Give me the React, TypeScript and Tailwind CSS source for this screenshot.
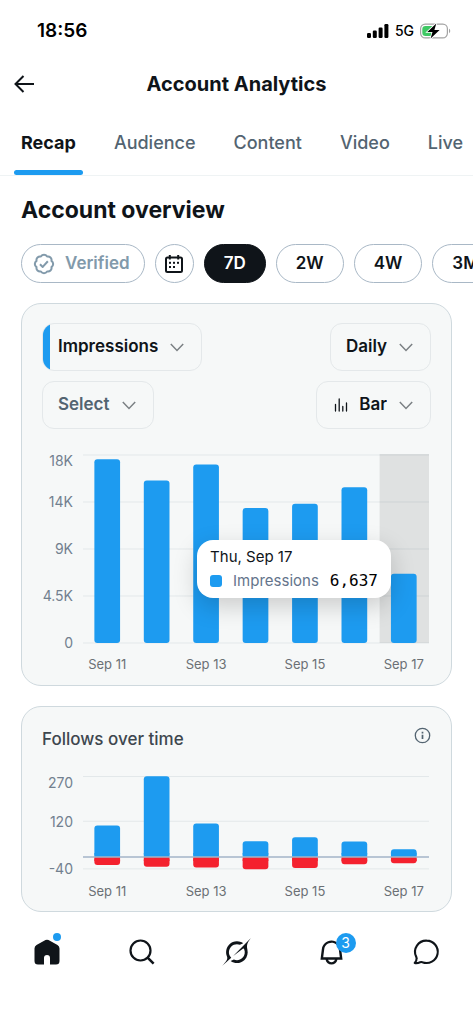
import { useState } from 'react';
import clsx from 'clsx';

const tabs = ['Recap', 'Audience', 'Content', 'Video', 'Live'];
const ranges = ['7D', '2W', '4W', '3M'];

const impressions = [
    { day: 'Sep 11', value: 17600 },
    { day: 'Sep 12', value: 15560 },
    { day: 'Sep 13', value: 17090 },
    { day: 'Sep 14', value: 12930 },
    { day: 'Sep 15', value: 13340 },
    { day: 'Sep 16', value: 14920 },
    { day: 'Sep 17', value: 6637 },
];

const follows = [
    { day: 'Sep 11', gained: 106, lost: 27 },
    { day: 'Sep 12', gained: 271, lost: 33 },
    { day: 'Sep 13', gained: 112, lost: 35 },
    { day: 'Sep 14', gained: 53, lost: 41 },
    { day: 'Sep 15', gained: 66, lost: 37 },
    { day: 'Sep 16', gained: 52, lost: 24 },
    { day: 'Sep 17', gained: 26, lost: 21 },
];

const band = 100 / 7;
const barX = (i: number) => `${(i + 0.23) * band}%`;
const barWidth = `${band * 0.52}%`;
const centerX = (i: number) => `${(i + 0.49) * band}%`;

const StatusBar = () => (
    <div className="flex items-center justify-between pt-[17px] pr-[22px] pl-[37px]">
        <span className="text-[19px] leading-7 font-semibold text-black">18:56</span>
        <div className="flex items-center gap-[6px]">
            <svg width="22" height="14" viewBox="0 0 22 14" fill="#000" aria-hidden="true">
                <rect x="0" y="9" width="4" height="5" rx="1.2" />
                <rect x="5.8" y="6.5" width="4" height="7.5" rx="1.2" />
                <rect x="11.6" y="3.5" width="4" height="10.5" rx="1.2" />
                <rect x="17.4" y="0" width="4" height="14" rx="1.2" />
            </svg>
            <span className="text-sm font-medium text-black">5G</span>
            <svg width="31" height="16" viewBox="0 0 31 16" aria-hidden="true">
                <rect x="0.6" y="1.1" width="26.8" height="13.8" rx="4.6" fill="#fff" stroke="#a3a3a3" strokeWidth="1.2" />
                <path d="M5.5 3H14v10H5.5A3.2 3.2 0 0 1 2.3 9.8V6.2A3.2 3.2 0 0 1 5.5 3Z" fill="#3fc864" />
                <path d="M29 5.8c1.6.6 1.6 3.800 0 4.4Z" fill="#a3a3a3" />
                <path d="M16.3.4 7.3 9h5.2l-1.900 6.600L19.600 7h-5.200Z" fill="#000" stroke="#fff" strokeWidth="1.6" paintOrder="stroke" />
            </svg>
        </div>
    </div>
);

const Chevron = () => (
    <svg width="14" height="9" viewBox="0 0 14 9" fill="none" stroke="#7b8084" strokeWidth="1.5" aria-hidden="true">
        <path d="M.8 1 7 7.4 13.2 1" />
    </svg>
);

const VerifiedIcon = () => (
    <svg width="22" height="22" viewBox="0 0 24 24" fill="none" stroke="#829aab" strokeWidth="2.2" strokeLinejoin="round" aria-hidden="true">
        <path d="M3.850 8.620a4 4 0 0 1 4.780-4.770 4 4 0 0 1 6.740 0 4 4 0 0 1 4.780 4.780 4 4 0 0 1 0 6.740 4 4 0 0 1-4.770 4.780 4 4 0 0 1-6.750 0 4 4 0 0 1-4.780-4.770 4 4 0 0 1 0-6.760Z" />
        <path d="m7.600 12.300 3 2.900 5.600-6.200" />
    </svg>
);

const CalendarIcon = () => (
    <svg width="20" height="20" viewBox="0 0 20 20" fill="#0f1419" aria-hidden="true">
        <rect x="2" y="3.5" width="16" height="14.5" rx="1.5" fill="none" stroke="#0f1419" strokeWidth="2" />
        <rect x="4.8" y="1" width="2" height="4.5" />
        <rect x="13.2" y="1" width="2" height="4.5" />
        <rect x="5" y="7.8" width="2" height="2" />
        <rect x="9" y="7.8" width="2" height="2" />
        <rect x="13" y="7.8" width="2" height="2" />
        <rect x="5" y="12" width="2" height="2" />
        <rect x="9" y="12" width="2" height="2" />
    </svg>
);

const BarsIcon = () => (
    <svg width="14" height="14" viewBox="0 0 14 14" fill="none" stroke="#0f1419" strokeWidth="1.3" strokeLinecap="round" aria-hidden="true">
        <path d="M1.5 6.5V13M5.2 1v12M8.8 8.5V13M12.5 5v8" />
    </svg>
);

type DropdownProps = {
    label: string;
    options: string[];
    accent?: boolean;
    muted?: boolean;
    icon?: React.ReactNode;
};

const Dropdown = ({ label, options, accent, muted, icon }: DropdownProps) => (
    <div className="relative flex h-12 items-center overflow-hidden rounded-xl border border-[#e4e8ea]">
        {accent && <span className="absolute inset-y-0 left-0 w-[7px] bg-[#1d9bf0]" />}
        {icon && <span className="pointer-events-none absolute left-[17px]">{icon}</span>}
        <select
            aria-label={label}
            className={clsx(
                'field-sizing-content h-full cursor-pointer appearance-none bg-transparent pr-[43px] text-[17px] font-semibold outline-none',
                icon ? 'pl-[42px]' : 'pl-[15px]',
                muted ? 'text-[#536471]' : 'text-[#0f1419]'
            )}
        >
            {options.map((option) => (
                <option key={option}>{option}</option>
            ))}
        </select>
        <span className="pointer-events-none absolute right-[17px]">
            <Chevron />
        </span>
    </div>
);

const DayLabels = ({ days, y }: { days: string[]; y: number }) => (
    <>
        {days.map((day, i) =>
            i % 2 === 0 ? (
                <text key={day} x={centerX(i)} y={y} textAnchor="middle" fontSize="13" fill="#6b7075">
                    {day}
                </text>
            ) : null
        )}
    </>
);

const YLabels = ({ labels, height }: { labels: { text: string; y: number }[]; height: number }) => (
    <svg width="31" height={height} className="shrink-0 overflow-visible">
        {labels.map((label) => (
            <text key={label.text} x="31" y={label.y} textAnchor="end" fontSize="14" fill="#72808f">
                {label.text}
            </text>
        ))}
    </svg>
);

const ImpressionsChart = () => {
    const base = 189;
    const toY = (value: number) => base - (value / 18000) * 188;

    return (
        <div className="relative mt-[25px] mr-[2px] flex gap-[10px]">
            <YLabels
                height={221}
                labels={[
                    { text: '18K', y: 12 },
                    { text: '14K', y: 53 },
                    { text: '9K', y: 100 },
                    { text: '4.5K', y: 147 },
                    { text: '0', y: 194 },
                ]}
            />
            <svg width="100%" height="221" role="img" aria-label="Impressions per day" className="min-w-0 flex-1 overflow-visible">
                {[0, 4500, 9000, 13500, 18000].map((tick) => (
                    <line key={tick} x1="0" x2="100%" y1={toY(tick)} y2={toY(tick)} stroke="#e3e8ea" />
                ))}
                <rect x={`${6 * band}%`} y="0" width={`${band}%`} height="189" fill="#000" fillOpacity="0.09" />
                {impressions.map((item, i) => (
                    <rect key={item.day} x={barX(i)} y={toY(item.value)} width={barWidth} height={base - toY(item.value)} rx="3" fill="#1d9bf0" />
                ))}
                <DayLabels days={impressions.map((item) => item.day)} y={215} />
            </svg>
            <div className="absolute top-[86px] right-[38px] rounded-2xl bg-white px-[13px] py-[5px] shadow-[0_8px_24px_rgba(0,0,0,0.18)]">
                <p className="text-[15px] leading-6 text-[#0f1419]">Thu, Sep 17</p>
                <div className="flex items-center gap-[11px] leading-6">
                    <span className="size-3 rounded-[3px] bg-[#1d9bf0]" />
                    <span className="text-[15px] text-[#64748b]">Impressions</span>
                    <span className="font-['DejaVu_Sans_Mono',monospace] text-base leading-6 text-black">6,637</span>
                </div>
            </div>
        </div>
    );
};

const FollowsChart = () => {
    const zero = 82;
    const scale = 0.298;

    return (
        <div className="mt-[24px] mr-[2px] flex gap-[10px]">
            <YLabels
                height={126}
                labels={[
                    { text: '270', y: 13 },
                    { text: '120', y: 52 },
                    { text: '-40', y: 99 },
                ]}
            />
            <svg width="100%" height="126" role="img" aria-label="Follows and unfollows per day" className="min-w-0 flex-1 overflow-visible">
                {[270, 120, -40].map((tick) => (
                    <line key={tick} x1="0" x2="100%" y1={zero - tick * scale} y2={zero - tick * scale} stroke="#e3e8ea" />
                ))}
                {follows.map((item, i) => {
                    const top = zero - item.gained * scale;
                    const bottom = zero + item.lost * scale;
                    return (
                        <g key={item.day}>
                            <rect x={barX(i)} y={top} width={barWidth} height={zero - top} rx="3" fill="#1d9bf0" />
                            <rect x={barX(i)} y={zero - 4} width={barWidth} height="4" fill="#1d9bf0" />
                            <rect x={barX(i)} y={zero} width={barWidth} height={bottom - zero} rx="3" fill="#f4212e" />
                            <rect x={barX(i)} y={zero} width={barWidth} height="4" fill="#f4212e" />
                        </g>
                    );
                })}
                <line x1="0" x2="100%" y1={zero} y2={zero} stroke="#a3b4c8" strokeWidth="1.3" />
                <DayLabels days={follows.map((item) => item.day)} y={121} />
            </svg>
        </div>
    );
};

const BottomNav = () => (
    <nav className="grid h-20 grid-cols-5 place-items-center">
        <a href="#home" aria-label="Home" className="relative">
            <svg width="26" height="26" viewBox="-.5 -.5 26 26" fill="#0f1419">
                <path d="M11 .6q1.500-.9 3 0L23 5.600Q25 7 25 9v12.500q0 3.500-3.500 3.500h-6v-6.500a3 3 0 0 0-6 0V25h-6Q0 25 0 21.500V9Q0 7 2 5.600Z" />
            </svg>
            <span className="absolute -top-[6px] -right-[1px] size-2 rounded-full bg-[#1d9bf0]" />
        </a>
        <a href="#search" aria-label="Search">
            <svg width="26" height="26" viewBox="0 0 26 26" fill="none" stroke="#0f1419" strokeWidth="2.2">
                <circle cx="11.5" cy="11.5" r="10" />
                <path d="m18.600 18.600 6 6" strokeWidth="2.5" />
            </svg>
        </a>
        <a href="#grok" aria-label="Grok">
            <svg width="29" height="28" viewBox="0 0 33 32" fill="#0f1419">
                <path d="M12.745 20.540l10.970-8.190c.539-.4 1.307-.244 1.564.38 1.349 3.288.746 7.241-1.938 9.955-2.683 2.714-6.417 3.310-9.830 1.954l-3.728 1.745c5.347 3.697 11.840 2.782 15.898-1.324 3.219-3.255 4.216-7.692 3.284-11.693l.008.009c-1.351-5.878.332-8.227 3.782-13.031L33 0l-4.540 4.590v-.014L12.743 20.544m-2.263 1.987c-3.837-3.707-3.175-9.446.1-12.755 2.420-2.449 6.388-3.448 9.852-1.979l3.720-1.737c-.67-.49-1.530-1.017-2.515-1.387-4.455-1.854-9.789-.931-13.410 2.728-3.483 3.523-4.579 8.940-2.697 13.561 1.405 3.454-.899 5.898-3.220 8.364C1.490 30.200.666 31.074 0 32l10.478-9.466" />
            </svg>
        </a>
        <a href="#notifications" aria-label="Notifications, 3 new" className="relative">
            <svg width="29" height="29" viewBox="0 0 24 24" fill="#0f1419">
                <path d="M19.993 9.042C19.480 5.017 16.054 2 11.996 2s-7.490 3.021-7.999 7.051L2.866 18H7.100c.463 2.282 2.481 4 4.900 4s4.437-1.718 4.900-4h4.236l-1.143-8.958zM12 20c-1.306 0-2.417-.835-2.829-2h5.658c-.412 1.165-1.523 2-2.829 2zm-6.866-4l.847-6.698C6.364 6.272 8.941 4 11.996 4s5.627 2.268 6.013 5.295L18.864 16H5.134z" />
            </svg>
            <span className="absolute -top-[5px] -right-[10px] flex size-5 items-center justify-center rounded-full bg-[#1d9bf0] text-sm text-white">
                3
            </span>
        </a>
        <a href="#messages" aria-label="Messages">
            <svg width="28" height="28" viewBox="0 0 28 28" fill="none" stroke="#0f1419" strokeWidth="2.1" strokeLinejoin="round">
                <path d="M14.700 2.600a11.200 11.200 0 1 1-4.300 21.600c-.8-.4-1.500-.3-2.300 0-1.700.8-3.500 1.200-5.400.8 1.300-1.300 2-2.900 1.900-4.600 0-.7-.2-1.200-.5-1.900A11.200 11.200 0 0 1 14.700 2.600Z" />
            </svg>
        </a>
    </nav>
);

const App = () => {
    const [tab, setTab] = useState('Recap');
    const [range, setRange] = useState('7D');

    return (
        <div className="min-h-screen w-full overflow-x-hidden bg-white font-['Inter','Liberation_Sans',sans-serif] text-[#0f1419]">
            <StatusBar />

            <header className="mt-[15px] grid h-12 grid-cols-[48px_1fr_48px] items-center">
                <button type="button" aria-label="Back" className="flex justify-center">
                    <svg width="20" height="18" viewBox="0 0 20 18" fill="none" stroke="#0f1419" strokeWidth="2">
                        <path d="M9.5 1 1.500 9l8 8M1.500 9H20" />
                    </svg>
                </button>
                <h1 className="text-center text-xl font-bold">Account Analytics</h1>
            </header>

            <div role="tablist" className="mt-[9px] flex gap-6 overflow-x-auto border-b border-[#eff3f4] px-[14px] [scrollbar-width:none]">
                {tabs.map((name) => (
                    <button
                        key={name}
                        type="button"
                        role="tab"
                        aria-selected={tab === name}
                        onClick={() => setTab(name)}
                        className={clsx(
                            'flex shrink-0 flex-col pt-[8px] text-[18px] leading-[36px]',
                            tab === name ? 'font-bold text-[#0f1419]' : 'font-medium text-[#536471]'
                        )}
                    >
                        <span className="px-[7px] pb-[9px]">{name}</span>
                        <span className={clsx('h-[5px] w-full rounded-full', tab === name && 'bg-[#1d9bf0]')} />
                    </button>
                ))}
            </div>

            <main className="px-[21px] pt-[18px]">
                <h2 className="text-[23px] leading-8 font-bold">Account overview</h2>

                <div className="-mr-[21px] mt-[18px] flex gap-[10px] overflow-x-auto [scrollbar-width:none]">
                    <button type="button" className="flex h-[39px] shrink-0 items-center gap-[10px] rounded-full border border-[#a9b8c6] px-[11px] pr-[14px] text-[17px] font-semibold text-[#829aab]">
                        <VerifiedIcon />
                        Verified
                    </button>
                    <button type="button" aria-label="Pick dates" className="flex size-[39px] shrink-0 items-center justify-center rounded-full border border-[#a9b8c6]">
                        <CalendarIcon />
                    </button>
                    {ranges.map((name) => (
                        <button
                            key={name}
                            type="button"
                            aria-pressed={range === name}
                            onClick={() => setRange(name)}
                            className={clsx(
                                'h-[39px] shrink-0 rounded-full border px-[19px] text-[17px] font-semibold',
                                range === name ? 'border-[#0f1419] bg-[#0f1419] text-white' : 'border-[#a9b8c6] text-[#0f1419]'
                            )}
                        >
                            {name}
                        </button>
                    ))}
                </div>

                <section className="mt-[20px] rounded-[20px] border border-[#cfd9de] bg-[#f6f8f8] px-5 pt-[19px] pb-[10px]">
                    <div className="flex items-start justify-between">
                        <div className="flex flex-col items-start gap-[10px]">
                            <Dropdown label="Metric" options={['Impressions']} accent />
                            <Dropdown label="Second metric" options={['Select']} muted />
                        </div>
                        <div className="flex flex-col items-end gap-[10px]">
                            <Dropdown label="Interval" options={['Daily']} />
                            <Dropdown label="Chart type" options={['Bar']} icon={<BarsIcon />} />
                        </div>
                    </div>
                    <ImpressionsChart />
                </section>

                <section className="mt-5 rounded-[20px] border border-[#cfd9de] bg-[#f6f8f8] px-5 pt-5 pb-[10px]">
                    <div className="flex items-start justify-between">
                        <h3 className="text-[17px] leading-6 font-medium text-[#3e474f]">Follows over time</h3>
                        <button type="button" aria-label="About follows over time">
                            <svg width="17" height="17" viewBox="0 0 17 17" fill="none" stroke="#536471" strokeWidth="1.3">
                                <circle cx="8.5" cy="8.5" r="7.2" />
                                <path d="M8.5 7.8V12M8.5 4.800v1.600" strokeWidth="1.7" />
                            </svg>
                        </button>
                    </div>
                    <FollowsChart />
                </section>
            </main>

            <BottomNav />
        </div>
    );
};

export default App;
